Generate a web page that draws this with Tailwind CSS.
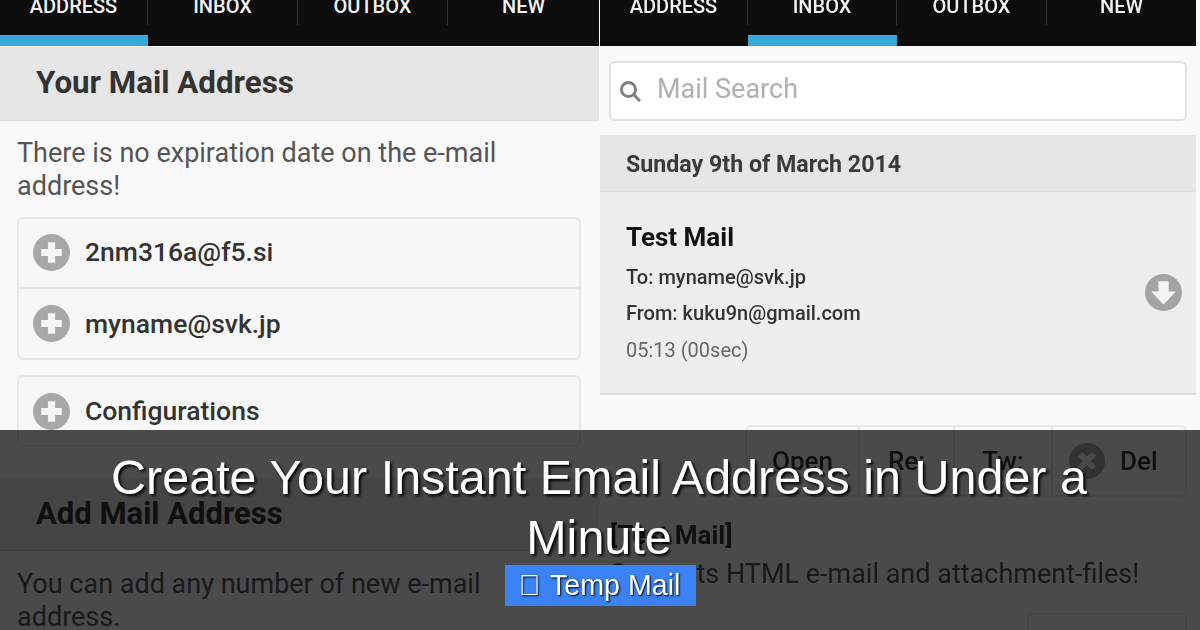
<!DOCTYPE html>
<html lang="en">
<head>
  <meta charset="UTF-8" />
  <title>Create Your Instant Email Address in Under a Minute</title>
  <script src="https://cdn.jsdelivr.net/npm/@tailwindcss/browser@4"></script>
</head>
<body class="bg-[#f9f9f9]">
  <div class="relative w-[1200px] h-[630px] overflow-hidden font-['Roboto',sans-serif]">

    <!-- Phone screenshots -->
    <div class="flex h-full blur-[0.6px]">

      <!-- Address tab -->
      <div class="w-[599px] shrink-0 h-full overflow-hidden bg-[#f9f9f9]">
        <div class="grid grid-cols-[148px_150px_150px_1fr] h-[46px] bg-[#0d0d0d] text-[#f2f2f2] text-[20px] font-medium text-center">
          <div class="flex flex-col justify-between"><div class="h-[25px] leading-[12px] border-r border-[#333]">ADDRESS</div><div class="h-[11px] bg-[#33a9dc]"></div></div>
          <div><div class="h-[25px] leading-[12px] border-r border-[#333]">INBOX</div></div>
          <div><div class="h-[25px] leading-[12px] border-r border-[#333]">OUTBOX</div></div>
          <div><div class="h-[25px] leading-[12px]">NEW</div></div>
        </div>
        <div class="h-[74px] flex items-center pl-[36px] bg-[#e6e6e6] border-b border-[#dcdcdc] text-[31.3px] font-bold text-[#333] mt-px">Your Mail Address</div>
        <p class="px-[17px] pt-[16px] text-[27px] leading-[33px] text-[#555]">There is no expiration date on the e-mail address!</p>

        <div class="mx-[17px] w-[564px] mt-[14px] rounded-md border-2 border-[#e8e8e8] bg-[#f7f7f7]">
          <div class="h-[70px] flex items-center gap-[15px] pl-[14px] border-b-2 border-[#e8e8e8] text-[26.5px] font-medium text-[#333]">
            <svg class="w-[37px] h-[37px] -mt-[2px]" viewBox="0 0 36 36"><circle cx="18" cy="18" r="18" fill="#a8a8a8"/><path d="M18 8v20M8 18h20" stroke="#f6f6f6" stroke-width="7"/></svg>
            <span class="-mt-[2px]">2nm316a@f5.si</span>
          </div>
          <div class="h-[69px] flex items-center gap-[15px] pl-[14px] text-[26.5px] font-medium text-[#333]">
            <svg class="w-[37px] h-[37px]" viewBox="0 0 36 36"><circle cx="18" cy="18" r="18" fill="#a8a8a8"/><path d="M18 8v20M8 18h20" stroke="#f6f6f6" stroke-width="7"/></svg>
            myname@svk.jp
          </div>
        </div>

        <div class="mx-[17px] w-[564px] mt-[15px] h-[72px] flex items-center gap-[15px] pl-[14px] rounded-md border-2 border-[#e8e8e8] bg-[#f7f7f7] text-[26.5px] font-medium text-[#333]">
          <svg class="w-[37px] h-[37px]" viewBox="0 0 36 36"><circle cx="18" cy="18" r="18" fill="#a8a8a8"/><path d="M18 8v20M8 18h20" stroke="#f6f6f6" stroke-width="7"/></svg>
          Configurations
        </div>

        <div class="mt-[31px] h-[73px] flex items-center pl-[36px] bg-[#e6e6e6] border-b border-[#dcdcdc] text-[31px] font-bold text-[#333]">Add Mail Address</div>
        <p class="px-[17px] pt-[17px] text-[27px] leading-[33px] text-[#555]">You can add any number of new e-mail address.</p>
      </div>

      <!-- Inbox tab -->
      <div class="w-[596px] shrink-0 ml-px h-full overflow-hidden bg-[#f9f9f9]">
        <div class="grid grid-cols-[148px_149px_150px_1fr] h-[46px] bg-[#0d0d0d] text-[#f2f2f2] text-[20px] font-medium text-center">
          <div><div class="h-[25px] leading-[12px] border-r border-[#333]">ADDRESS</div></div>
          <div class="flex flex-col justify-between"><div class="h-[25px] leading-[12px] border-r border-[#333]">INBOX</div><div class="h-[11px] bg-[#33a9dc]"></div></div>
          <div><div class="h-[25px] leading-[12px] border-r border-[#333]">OUTBOX</div></div>
          <div><div class="h-[25px] leading-[12px]">NEW</div></div>
        </div>

        <div class="ml-[9px] w-[578px] mt-[15px] h-[60px] flex items-center gap-[16px] pl-[8px] pb-[4px] bg-white rounded-md border-2 border-[#e2e2e2] text-[27px] text-[#b0b0b0]">
          <svg class="w-[22px] h-[22px] mt-[3px]" viewBox="0 0 22 22" fill="none" stroke="#808080" stroke-width="3"><circle cx="9.5" cy="9.5" r="7"/><path d="M14.5 14.5 21 21"/></svg>
          Mail Search
        </div>

        <div class="mt-[14px] h-[57px] flex items-center pl-[26px] pt-[3px] bg-[#e6e6e6] border-b border-[#dfdfdf] text-[23.2px] font-bold text-[#3a3a3a]">Sunday 9th of March 2014</div>

        <div class="h-[203px] flex items-start justify-between pt-[27px] pl-[26px] pr-[14px] bg-[#eeeeee] border-b-2 border-[#dcdcdc]">
          <div>
            <div class="text-[26px] font-bold leading-[36px] text-[#111]">Test Mail</div>
            <div class="mt-[4px] text-[20px] font-medium leading-[36px] text-[#333]">To: myname@svk.jp</div>
            <div class="text-[20px] font-medium leading-[37px] text-[#333]">From: kuku9n@gmail.com</div>
            <div class="text-[20px] leading-[37px] text-[#666]">05:13 (00sec)</div>
          </div>
          <svg class="w-[37px] h-[37px] self-center -mt-[28px]" viewBox="0 0 36 36"><circle cx="18" cy="18" r="18" fill="#a4a4a4"/><path d="M13 7h10v10h7L18 30 6 17h7z" fill="#f4f4f4"/></svg>
        </div>

        <div class="ml-[145px] w-[442px] mt-[30px] h-[72px] flex items-center rounded-md border-2 border-[#e8e8e8] bg-[#f7f7f7] text-[26px] font-medium text-[#333]">
          <div class="w-[113px] h-full flex items-center justify-center border-r-2 border-[#e8e8e8]">Open</div>
          <div class="w-[95px] h-full flex items-center justify-center border-r-2 border-[#e8e8e8]">Re:</div>
          <div class="w-[98px] h-full flex items-center justify-center border-r-2 border-[#e8e8e8]">Tw:</div>
          <div class="flex-1 h-full flex items-center pl-[16px] gap-[15px]">
            <svg class="w-[36px] h-[36px]" viewBox="0 0 36 36"><circle cx="18" cy="18" r="18" fill="#a8a8a8"/><path d="M11 11l14 14M25 11 11 25" stroke="#f6f6f6" stroke-width="6"/></svg>
            Del
          </div>
        </div>

        <div class="pl-[10px] mt-[21px] text-[26px] font-bold leading-[34px] text-[#333]">[Test Mail]</div>
        <p class="pl-[10px] mt-[6px] text-[27px] leading-[33px] text-[#555]">Supports HTML e-mail and attachment-files!</p>
        <div class="ml-[427px] w-[160px] mt-[22px] h-[60px] rounded-md border-2 border-[#e8e8e8] bg-[#f7f7f7]"></div>
      </div>
    </div>

    <!-- Title overlay -->
    <div class="absolute left-0 right-0 bottom-0 h-[200px] pt-[17px] bg-black/70 flex flex-col items-center text-white font-['Liberation_Sans',sans-serif]">
      <h1 class="w-[1040px] pr-[2px] text-center text-[48.5px] leading-[60px] font-normal [text-shadow:2px_2px_3px_#000]">Create Your Instant Email Address in Under a Minute</h1>
      <div class="-mt-[2px] h-[41px] w-[191px] flex items-center justify-center gap-[10px] pr-[1px] bg-[#3b82f6] text-[28.6px] [text-shadow:1px_1px_2px_#000]"><span>&#xE000;</span><span>Temp Mail</span></div>
    </div>
  </div>
</body>
</html>
